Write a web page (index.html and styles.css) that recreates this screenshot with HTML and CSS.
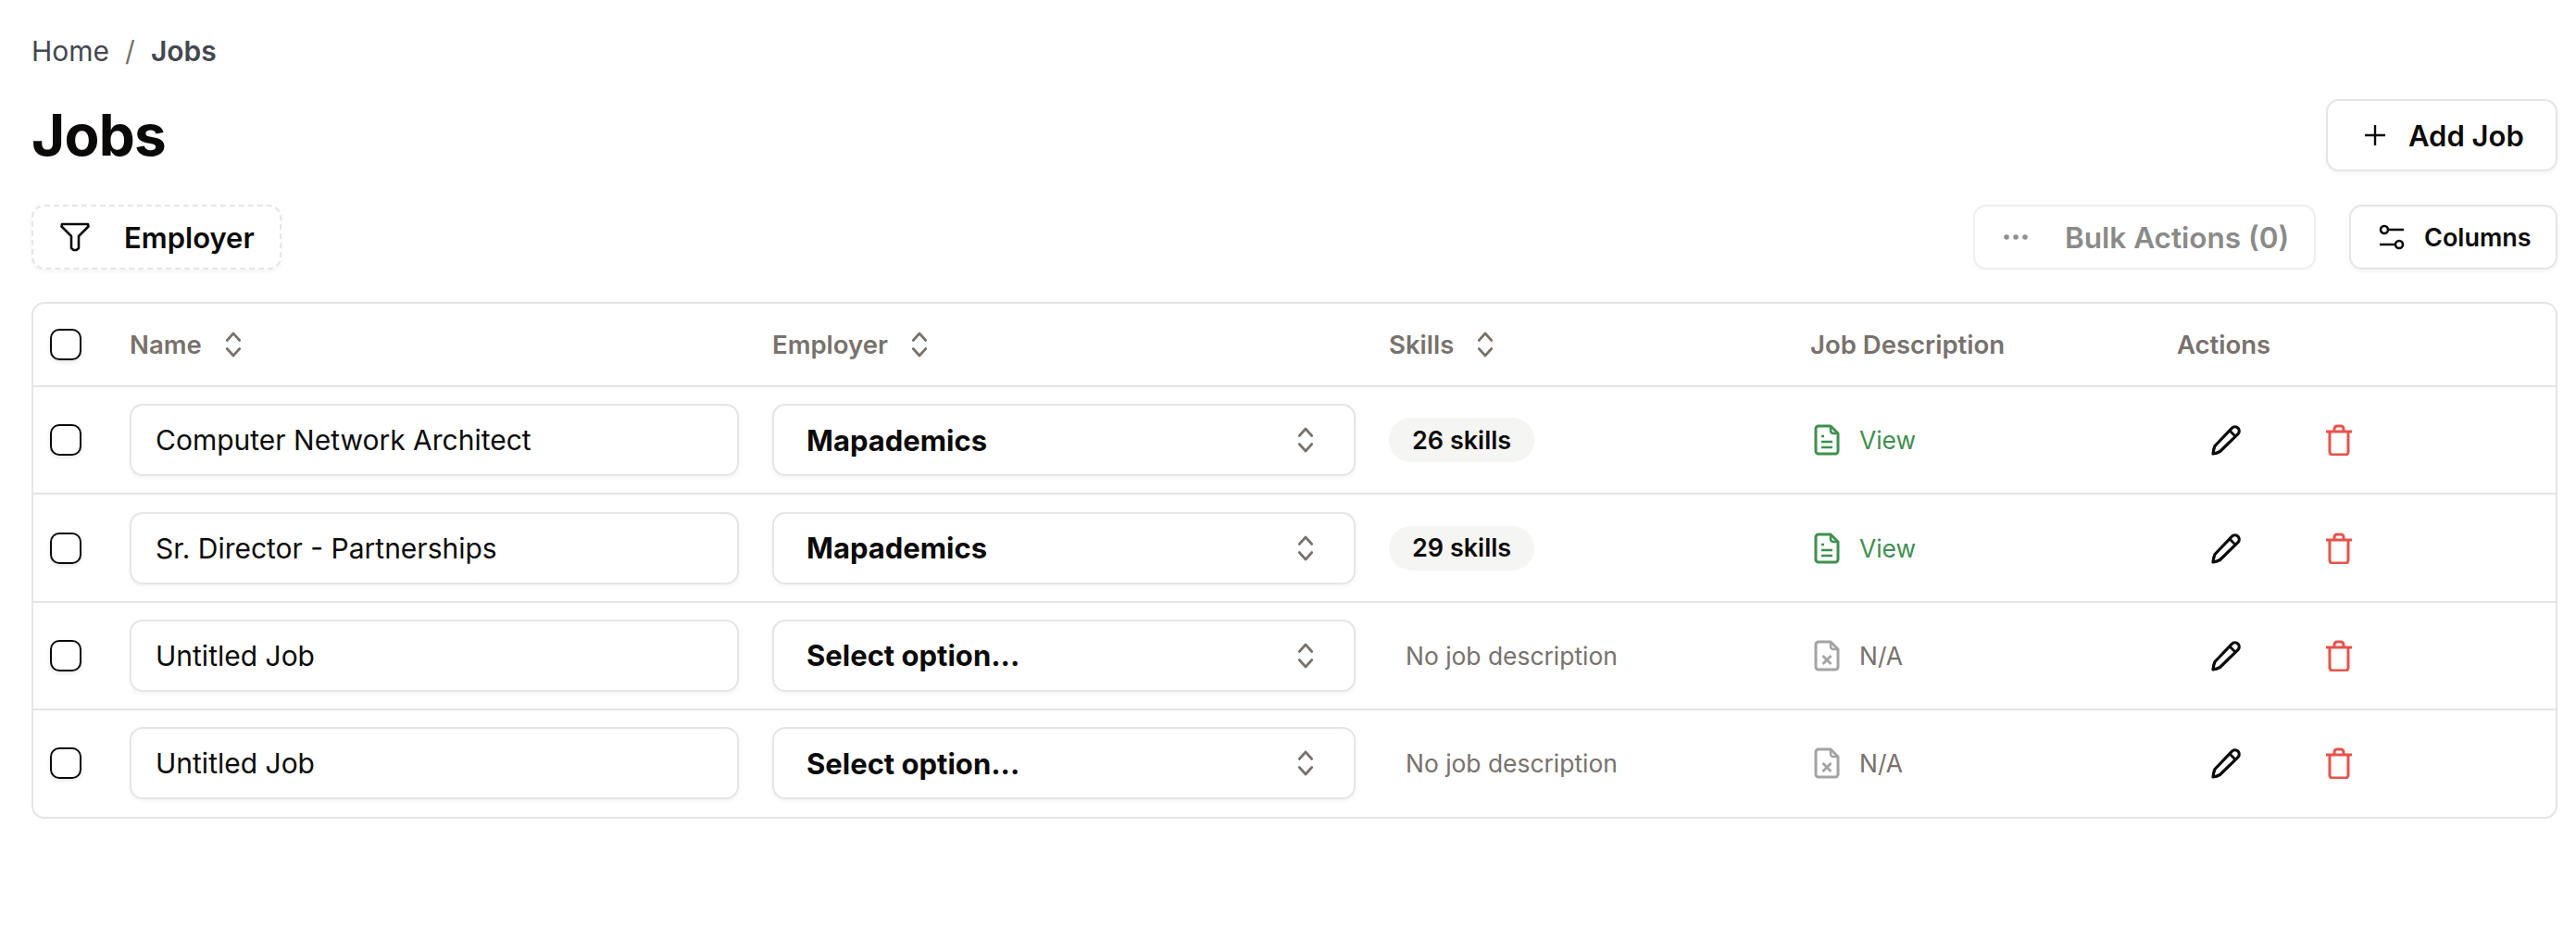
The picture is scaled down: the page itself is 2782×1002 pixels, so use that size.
FILE: index.html
```html
<!DOCTYPE html>
<html lang="en">
<head>
<meta charset="utf-8">
<title>Jobs</title>
<link rel="stylesheet" href="styles.css">
</head>
<body>
<svg class="defs" width="0" height="0" aria-hidden="true">
  <symbol id="updown" viewBox="0 0 24 40"><path d="M3 14 12 4l9 10M3 26l9 10 9-10" fill="none" stroke="currentColor" stroke-width="3.600" stroke-linecap="round" stroke-linejoin="round"/></symbol>
  <symbol id="doc" viewBox="0 0 28 34"><path d="M5 2h13l8 8v19a3 3 0 0 1-3 3H5a3 3 0 0 1-3-3V5a3 3 0 0 1 3-3Z" fill="none" stroke="currentColor" stroke-width="3" stroke-linejoin="round"/><path d="M18 2v5a3 3 0 0 0 3 3h5" fill="none" stroke="currentColor" stroke-width="2.500"/><path d="M8 13h3M8 19h12M8 25h12" stroke="currentColor" stroke-width="2.600" fill="none"/></symbol>
  <symbol id="docx" viewBox="0 0 28 34"><path d="M5 2h13l8 8v19a3 3 0 0 1-3 3H5a3 3 0 0 1-3-3V5a3 3 0 0 1 3-3Z" fill="none" stroke="currentColor" stroke-width="3" stroke-linejoin="round"/><path d="M18 2v5a3 3 0 0 0 3 3h5" fill="none" stroke="currentColor" stroke-width="2.500"/><path d="m9.500 17 9 9m0-9-9 9" stroke="currentColor" stroke-width="2.800" fill="none"/></symbol>
  <symbol id="pencil" viewBox="0 0 34 34"><path d="M24.500 4.200a4.500 4.500 0 0 1 6.400 6.400L11.500 29.500Q8 31.500 4 32q.3-4.500 2-8.500Z" fill="none" stroke="currentColor" stroke-width="3.200" stroke-linejoin="round"/><path d="m22 7 6 6" stroke="currentColor" stroke-width="2.800" fill="none"/></symbol>
  <symbol id="trash" viewBox="0 0 30 34"><path d="M1 8h28M5 8v22a3 3 0 0 0 3 3h14a3 3 0 0 0 3-3V8M10 8V5a3 3 0 0 1 3-3h4a3 3 0 0 1 3 3v3" fill="none" stroke="currentColor" stroke-width="3"/></symbol>
</svg>

<main class="page">
  <nav class="crumbs"><span>Home</span><span class="slash">/</span><span class="crumb-current">Jobs</span></nav>

  <header class="title-row">
    <h1 class="title">Jobs</h1>
    <button class="btn btn-add">
      <svg class="icon-plus" viewBox="0 0 24 24"><path d="M12 1v22M1 12h22" stroke="currentColor" stroke-width="2.400" fill="none"/></svg>
      <span>Add Job</span>
    </button>
  </header>

  <section class="toolbar">
    <button class="btn btn-filter">
      <svg class="icon-filter" viewBox="0 0 34 32"><path d="M3 2h28l.5 2.500L21 15v13l-2.500 2h-3L13 28V15L2.500 4.500Z" fill="none" stroke="currentColor" stroke-width="2.600" stroke-linejoin="round"/></svg>
      <span>Employer</span>
    </button>
    <div class="toolbar-right">
      <button class="btn btn-bulk">
        <svg class="icon-dots" viewBox="0 0 28 8"><circle cx="4" cy="4" r="2.800"/><circle cx="14" cy="4" r="2.800"/><circle cx="24" cy="4" r="2.800"/></svg>
        <span>Bulk Actions (0)</span>
      </button>
      <button class="btn btn-columns">
        <svg class="icon-cols" viewBox="0 0 28 30"><circle cx="6" cy="7" r="4" fill="none" stroke="currentColor" stroke-width="2.600"/><circle cx="22" cy="23" r="4" fill="none" stroke="currentColor" stroke-width="2.600"/><path d="M10 7h17M1 23h17" stroke="currentColor" stroke-width="2.600" fill="none"/></svg>
        <span>Columns</span>
      </button>
    </div>
  </section>

  <section class="table">
    <div class="row head">
      <span class="check"></span>
      <span class="th">Name <svg class="sort"><use href="#updown"/></svg></span>
      <span class="th">Employer <svg class="sort"><use href="#updown"/></svg></span>
      <span class="th">Skills <svg class="sort"><use href="#updown"/></svg></span>
      <span class="th">Job Description</span>
      <span class="th">Actions</span>
    </div>

    <div class="row">
      <span class="check"></span>
      <div class="field name">Computer Network Architect</div>
      <div class="field select"><span>Mapademics</span><svg class="select-caret"><use href="#updown"/></svg></div>
      <div><span class="pill">26 skills</span></div>
      <div class="desc ok"><svg class="doc"><use href="#doc"/></svg><span>View</span></div>
      <div class="actions"><svg class="pencil"><use href="#pencil"/></svg><svg class="trash"><use href="#trash"/></svg></div>
    </div>

    <div class="row">
      <span class="check"></span>
      <div class="field name">Sr. Director - Partnerships</div>
      <div class="field select"><span>Mapademics</span><svg class="select-caret"><use href="#updown"/></svg></div>
      <div><span class="pill">29 skills</span></div>
      <div class="desc ok"><svg class="doc"><use href="#doc"/></svg><span>View</span></div>
      <div class="actions"><svg class="pencil"><use href="#pencil"/></svg><svg class="trash"><use href="#trash"/></svg></div>
    </div>

    <div class="row">
      <span class="check"></span>
      <div class="field name">Untitled Job</div>
      <div class="field select"><span>Select option...</span><svg class="select-caret"><use href="#updown"/></svg></div>
      <div class="none">No job description</div>
      <div class="desc na"><svg class="doc"><use href="#docx"/></svg><span>N/A</span></div>
      <div class="actions"><svg class="pencil"><use href="#pencil"/></svg><svg class="trash"><use href="#trash"/></svg></div>
    </div>

    <div class="row">
      <span class="check"></span>
      <div class="field name">Untitled Job</div>
      <div class="field select"><span>Select option...</span><svg class="select-caret"><use href="#updown"/></svg></div>
      <div class="none">No job description</div>
      <div class="desc na"><svg class="doc"><use href="#docx"/></svg><span>N/A</span></div>
      <div class="actions"><svg class="pencil"><use href="#pencil"/></svg><svg class="trash"><use href="#trash"/></svg></div>
    </div>
  </section>
</main>
</body>
</html>
```

FILE: styles.css
```css
* { box-sizing: border-box; }
html, body { margin: 0; background: #fff; }
body { font-family: Inter, "Liberation Sans", sans-serif; color: #0c0a09; }
.defs { position: absolute; }
.page { padding: 36px 20px 0 34px; }

.crumbs { display: flex; align-items: center; height: 38px; font-size: 30px; color: #44474f; }
.slash { margin: 0 17px; color: #78716c; }
.crumb-current { font-weight: 600; }

.title-row { display: flex; justify-content: space-between; align-items: center; height: 78px; margin-top: 33px; }
.title { margin: 0; font-size: 62px; font-weight: 700; letter-spacing: -.75px; line-height: 78px; }

.btn { display: flex; align-items: center; margin: 0; padding: 0; background: #fff; font-family: inherit; color: #0c0a09; border: 2px solid #e7e5e4; border-radius: 14px; box-shadow: 0 2px 4px rgba(0,0,0,.05); }
.btn-add { width: 250px; height: 78px; padding-left: 39px; gap: 24px; font-size: 31px; font-weight: 600; }
.icon-plus { width: 24px; height: 24px; }

.toolbar { display: flex; justify-content: space-between; margin-top: 36px; }
.toolbar-right { display: flex; gap: 36px; }
.btn-filter { width: 270px; height: 70px; padding-left: 28px; gap: 36px; font-size: 31px; font-weight: 600; border-style: dashed; }
.icon-filter { width: 34px; height: 32px; }
.btn-bulk { width: 370px; height: 70px; padding-left: 30px; gap: 39px; font-size: 31.500px; font-weight: 600; color: #8a8a88; border-color: #f0efee; box-shadow: 0 2px 4px rgba(0,0,0,.025); }
.icon-dots { width: 28px; height: 8px; fill: #8f8f8d; }
.btn-columns { width: 225px; height: 70px; padding-left: 30px; gap: 21px; font-size: 27px; font-weight: 600; }
.icon-cols { width: 28px; height: 30px; }

.table { margin-top: 35px; border: 2px solid #e7e5e4; border-radius: 14px; }
.row { display: grid; grid-template-columns: 86px 694px 666px 455px 396px 1fr; align-items: center; height: 116.400px; padding-left: 18px; border-top: 2px solid #e7e5e4; }
.head { height: 88px; border-top: 0; }
.check { display: block; width: 34px; height: 34px; border: 2px solid #0c0a09; border-radius: 10px; box-shadow: 0 2px 4px rgba(0,0,0,.1); }

.th { display: flex; align-items: center; gap: 22px; font-size: 27.500px; font-weight: 600; color: #78716c; }
.sort { width: 24px; height: 30px; color: #78716c; }

.field { display: flex; align-items: center; height: 78px; font-size: 30px; border: 2px solid #e7e5e4; border-radius: 14px; box-shadow: 0 2px 4px rgba(0,0,0,.05); }
.name { width: 658px; padding-left: 26px; }
.select { justify-content: space-between; width: 630px; padding: 0 40px 0 35px; font-size: 31px; font-weight: 700; }
.select-caret { width: 24px; height: 30px; color: #78716c; }

.pill { display: inline-flex; align-items: center; height: 48px; padding: 0 25px; font-size: 27px; font-weight: 600; background: #f5f5f4; border-radius: 24px; }
.none { padding-left: 18px; font-size: 26.400px; color: #78716c; }

.desc { display: flex; align-items: center; gap: 21px; padding-left: 4px; font-size: 26.400px; }
.doc { width: 28px; height: 34px; }
.ok { color: #3f8f4f; }
.na { color: #78716c; }
.na .doc { color: #a3a3a3; }

.actions { display: flex; align-items: center; padding-left: 35px; }
.pencil { width: 34px; height: 34px; color: #0c0a09; }
.trash { width: 30px; height: 34px; margin-left: 91px; color: #e5534b; }
```
